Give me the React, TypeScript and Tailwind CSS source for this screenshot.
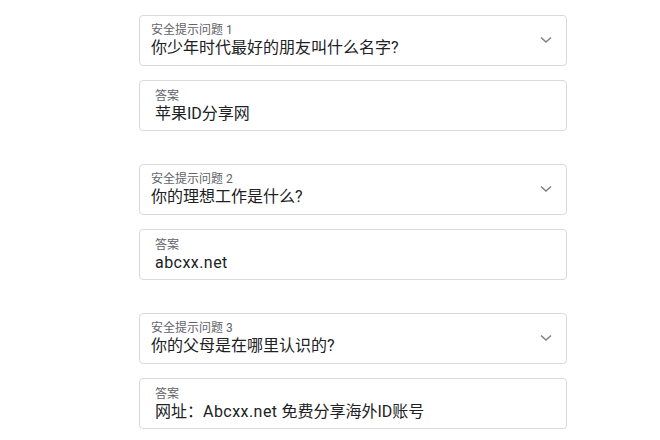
import React from "react";

const L = ({ children }: { children: React.ReactNode }) => (
  <span className="tracking-[0.45px]">{children}</span>
);

const groups = [
  { n: "1", q: "你少年时代最好的朋友叫什么名字?", a: <>苹果ID分享网</> },
  { n: "2", q: "你的理想工作是什么?", a: <L>abcxx.net</L> },
  {
    n: "3",
    q: "你的父母是在哪里认识的?",
    a: (
      <>
        网址：<L>Abcxx.net</L> 免费分享海外ID账号
      </>
    ),
  },
];

export default function App() {
  return (
    <div
      className="w-[660px] h-[440px] bg-white overflow-hidden pt-[15px]"
      style={{ fontFamily: 'Roboto, "Noto Sans CJK SC", sans-serif' }}
    >
      <div className="ml-[139px] w-[428px] flex flex-col gap-[33px]">
        {groups.map((g) => (
          <div key={g.n} className="flex flex-col gap-[14px]">
            <div className="h-[51px] border border-[#d9d9d9] rounded-[4px] flex items-start justify-between pl-[11px] pr-[14px]">
              <div className="flex flex-col pt-[6px]">
                <span className="text-[12px] leading-[16px] text-[#5f6368]">安全提示问题 {g.n}</span>
                <span className="text-[16px] leading-[20px] text-[#202124]">{g.q}</span>
              </div>
              <svg width="12" height="8" viewBox="0 0 12 8" className="mt-[20px]">
                <path d="M1 1.5 L6 6 L11 1.5" fill="none" stroke="#7a8090" strokeWidth="1.5" />
              </svg>
            </div>
            <div className="h-[51px] border border-[#d9d9d9] rounded-[4px] flex flex-col pl-[15px] pt-[7px]">
              <span className="text-[12px] leading-[16px] text-[#5f6368]">答案</span>
              <span className="text-[16px] leading-[20px] text-[#202124]">{g.a}</span>
            </div>
          </div>
        ))}
      </div>
    </div>
  );
}
